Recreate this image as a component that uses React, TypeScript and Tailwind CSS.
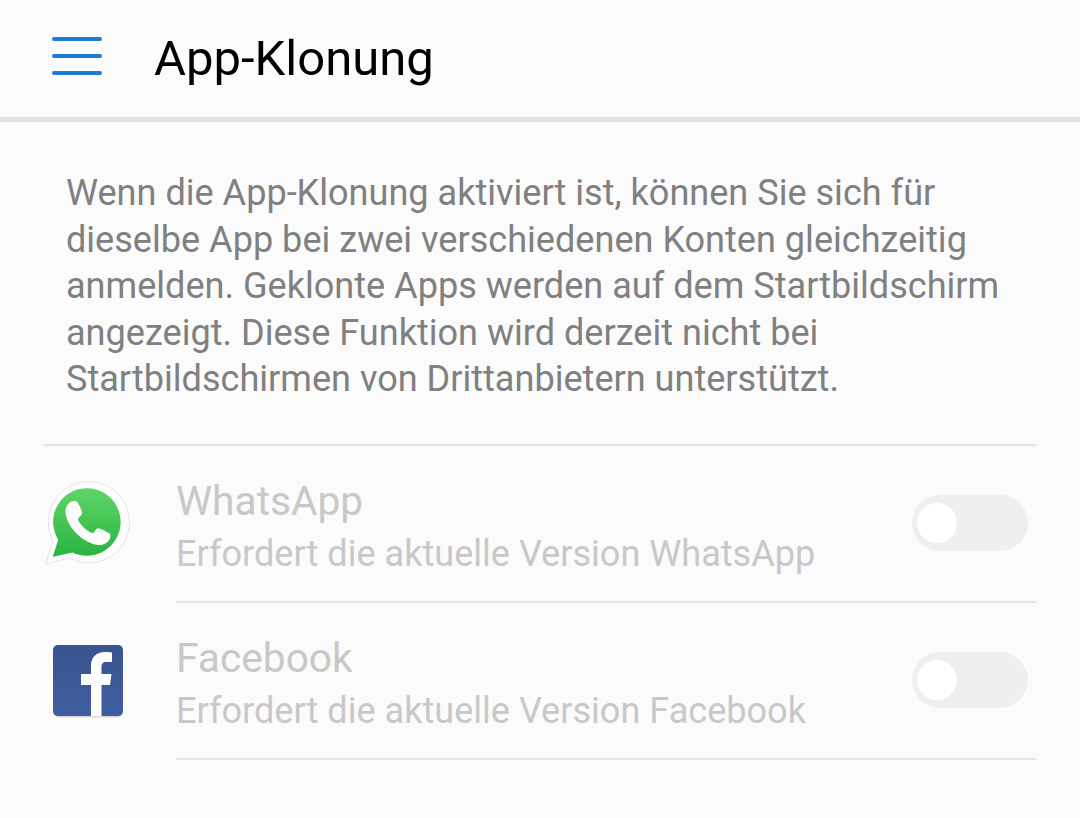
import React from "react";

const apps = [
	{ name: "WhatsApp", sub: "Erfordert die aktuelle Version WhatsApp", icon: "wa" },
	{ name: "Facebook", sub: "Erfordert die aktuelle Version Facebook", icon: "fb" },
];

const WhatsAppIcon = () => (
	<svg width="90" height="90" viewBox="0 0 90 90">
		<defs>
			<linearGradient id="wag" x1="0" y1="0" x2="0" y2="1">
				<stop offset="0" stopColor="#5fd568" />
				<stop offset="1" stopColor="#2ab43f" />
			</linearGradient>
		</defs>
		<path
			d="M2 85 L9 61 A41.500 41.500 0 1 1 26 78.500 Z"
			fill="#fdfdfd"
			stroke="#e3e3e3"
			strokeWidth="1"
		/>
		<path d="M9 77.500 L14.500 60 A34.500 34.500 0 1 1 29 73 Z" fill="url(#wag)" />
		<path
			d="M28 21 C24.500 22.500 22 26.500 22 31 C22 39 27 47.500 33.500 54 C40 60.500 49 65.500 57 65.500 C62 65.500 66.500 62 67.500 58.500 C68 56.500 68 55 67.500 54 C65.500 52.500 59 49 56 48.500 C54.500 48.200 53.500 49 52.500 50.500 C51 52.500 50 53.500 48.500 53 C44 51.500 36.500 44.500 35 40 C34.500 38.500 35.500 37.500 37 36 C38.500 34.500 39.300 33.500 39 32 C38.500 29.500 35.500 23.500 34 21.500 C33 20.500 30.500 20 28 21 Z"
			fill="#fdfdfd"
		/>
	</svg>
);

const FacebookIcon = () => (
	<svg width="72" height="74" viewBox="0 0 72 74">
		<defs>
			<linearGradient id="fbg" x1="0" y1="0" x2="0" y2="1">
				<stop offset="0" stopColor="#38548f" />
				<stop offset="1" stopColor="#405e9f" />
			</linearGradient>
		</defs>
		<rect x="1" y="1.500" width="70" height="72" rx="5" fill="#d8d8d8" />
		<rect x="1" y="1" width="70" height="71" rx="5" fill="url(#fbg)" />
		<path
			d="M39 72 V41 H29 V30 H39 V22 C39 13 44.500 8 53 8 C56.500 8 59 8.300 60 8.500 V18 H54.500 C50.500 18 49.500 20 49.500 23 V30 H59.500 L58 41 H49.500 V72 Z"
			fill="#fdfdfd"
		/>
	</svg>
);

export default function App() {
	return (
		<div className="w-[1080px] h-[818px] overflow-hidden bg-[#fbfbfb] font-['Roboto',sans-serif]">
			{/* header */}
			<div className="flex items-center h-[122px] pb-[5px] border-b-[5px] border-[#e2e2e2]">
				<div className="flex flex-col gap-[13px] ml-[52px] w-[50px]">
					<div className="h-[4px] rounded-full bg-[#1f7ad6]"></div>
					<div className="h-[4px] rounded-full bg-[#1f7ad6]"></div>
					<div className="h-[4px] rounded-full bg-[#1f7ad6]"></div>
				</div>
				<h1 className="ml-[52px] mt-[6px] text-[49px] leading-[56px] text-black">App-Klonung</h1>
			</div>

			{/* beschreibung */}
			<p className="w-[1000px] ml-[66px] mt-[48px] text-[36.1px] leading-[46.5px] text-[#808080]">
				Wenn die App-Klonung aktiviert ist, können Sie sich für
				<br />
				dieselbe App bei zwei verschiedenen Konten gleichzeitig
				<br />
				anmelden. Geklonte Apps werden auf dem Startbildschirm
				<br />
				angezeigt. Diese Funktion wird derzeit nicht bei
				<br />
				Startbildschirmen von Drittanbietern unterstützt.
			</p>

			{/* liste */}
			<div className="mt-[41px] mx-[44px] pt-px border-t-2 border-[#e4e4e4]">
				{apps.map((app) => {
					return (
						<div key={app.name} className="flex items-center h-[156.5px]">
							<div className="flex justify-center w-[88px]">
								{app.icon === "wa" ? <WhatsAppIcon /> : <FacebookIcon />}
							</div>
							<div className="flex items-center self-stretch flex-1 ml-[44px] pr-[8px] border-b-2 border-[#e4e4e4]">
								<div className="flex-1 mt-[9px]">
									<p className="text-[40.7px] leading-[52px] text-[#c8c8c8]">{app.name}</p>
									<p className="text-[36.1px] leading-[54px] text-[#c8c8c8]">{app.sub}</p>
								</div>
								<div className="flex items-center w-[116px] h-[56px] -mt-[1px] pl-[5px] rounded-full bg-[#efefef]">
									<div className="w-[40px] h-[40px] rounded-full bg-white"></div>
								</div>
							</div>
						</div>
					);
				})}
			</div>
		</div>
	);
}
